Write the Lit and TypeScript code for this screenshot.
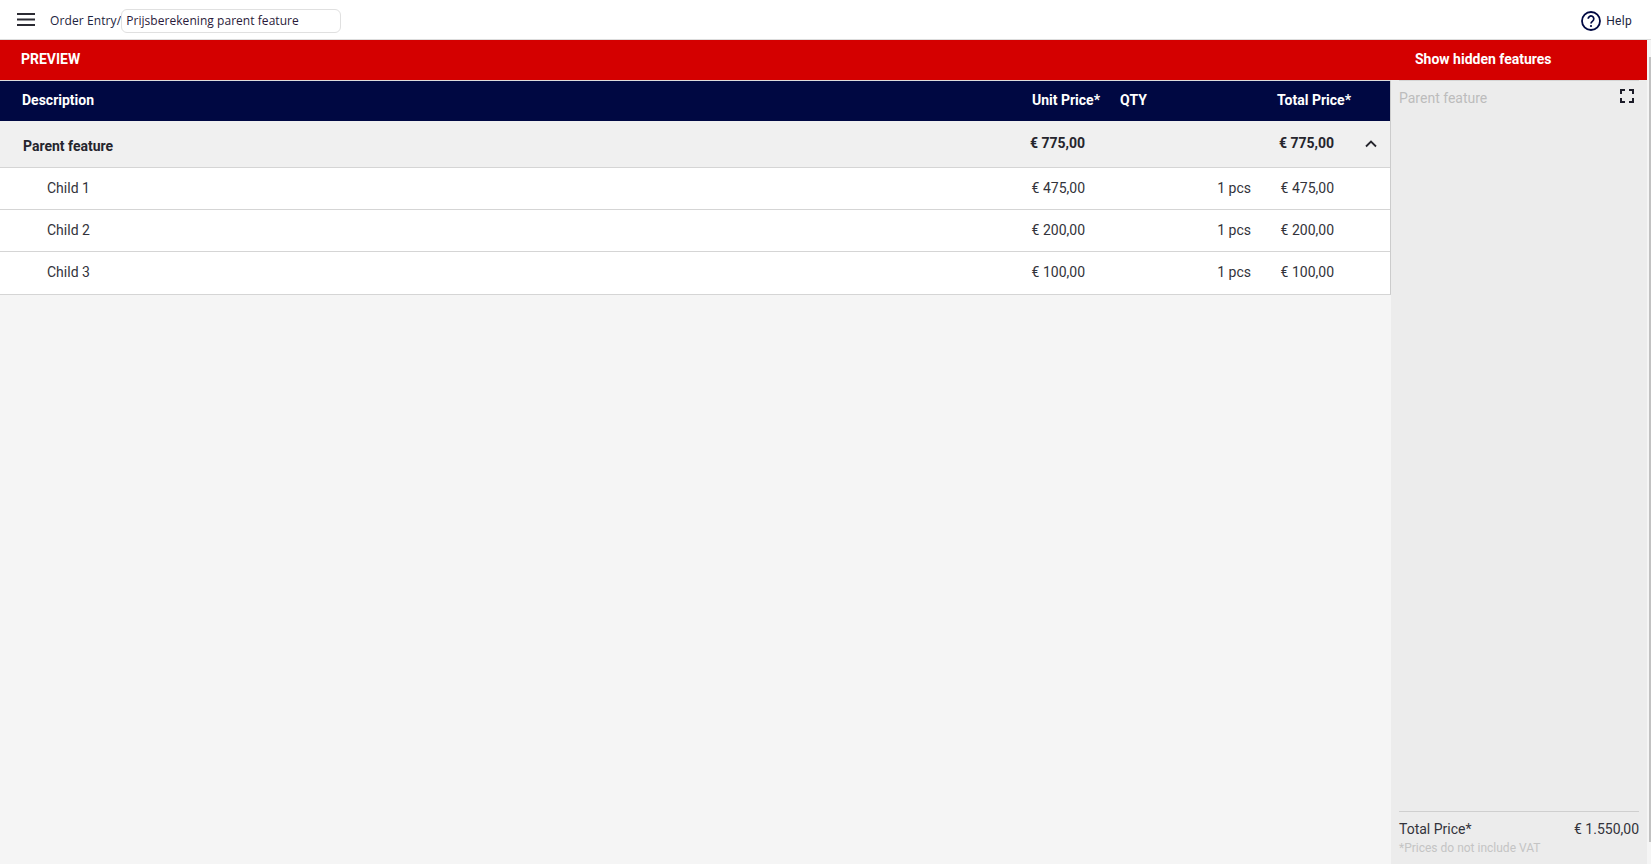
import { LitElement, html, css } from "lit";
import { customElement } from "lit/decorators.js";

const children = [
  { name: "Child 1", price: "€ 475,00" },
  { name: "Child 2", price: "€ 200,00" },
  { name: "Child 3", price: "€ 100,00" },
];

@customElement("app-root")
export class AppRoot extends LitElement {
  static styles = css`
    :host { display: block; width: 1651px; height: 864px; overflow: hidden; position: relative; background: #f5f5f5; font-family: Roboto, sans-serif; font-size: 14px; color: #33333b; }
    .top { height: 40px; box-sizing: border-box; background: #fff; border-bottom: 1px solid #ddd; display: flex; align-items: center; font-family: "Open Sans", sans-serif; font-size: 12px; padding: 2px 19px 0 17px; color: #1d2440; }
    .burger { width: 18px; height: 13px; display: block; margin: -2px 15px 0 0; }
    .crumb { letter-spacing: .1px; }
    .name { width: 220px; height: 24px; box-sizing: border-box; border: 1px solid #e0e0e0; border-radius: 6px; padding: 0 4px; display: flex; align-items: center; color: #2a1a3a; font-size: 12px; letter-spacing: .05px; }
    .help { margin-left: auto; display: flex; align-items: center; gap: 5px; font-family: Roboto, sans-serif; font-size: 12px; letter-spacing: .3px; }
    .help svg { display: block; }
    .red { height: 40px; width: 1647px; background: #d40000; color: #fff; font-weight: 700; display: flex; align-items: center; padding: 0 0 2px 21px; box-sizing: border-box; }
    .red .show { margin-left: auto; width: 232px; }
    .main { display: flex; height: 784px; width: 1647px; }
    .left { width: 1391px; flex: none; border-top: 1px solid #ddd; box-sizing: border-box; }
    .table { border-right: 1px solid #ccc; border-bottom: 1px solid #d5d5d5; box-sizing: border-box; }
    .row { display: grid; grid-template-columns: 1fr 85px 166px 83px 56px; align-items: center; box-sizing: border-box; padding-bottom: 2px; }
    .num { text-align: right; }
    .head { height: 40px; background: #000842; color: #fff; font-weight: 700; grid-template-columns: 1fr 90px 176px 75px 39px; padding-left: 22px; }
    .head .qty { padding-left: 20px; }
    .parent { height: 47px; background: #f0f0f0; font-weight: 700; border-bottom: 1px solid #d5d5d5; padding-left: 23px; color: #25252d; }
    .parent .lbl { padding-top: 6px; }
    .parent .chev { display: flex; justify-content: flex-end; padding-right: 12px; }
    .chev svg { display: block; }
    .child { height: 42px; background: #fff; border-bottom: 1px solid #d5d5d5; padding-left: 47px; }
    .child:last-child { border-bottom: 0; }
    .right { flex: 1; background: #ececec; box-sizing: border-box; padding: 0 8px; display: flex; flex-direction: column; }
    .pt { display: flex; justify-content: space-between; border-top: 1px solid #d5d5d5; padding-top: 8px; color: #bcbcbc; align-items: flex-start; }
    .pt span { padding-top: 1px; }
    .pt svg { margin-right: 5px; display: block; }
    .foot { margin-top: auto; border-top: 1px solid #cfcfcf; padding-top: 9px; height: 53px; box-sizing: border-box; }
    .total { display: flex; justify-content: space-between; }
    .note { font-size: 12px; color: #c4c4c4; margin-top: 4px; }
    .scroll { position: absolute; right: 0; top: 57px; width: 2px; height: 785px; background: #c1c1c1; }
  `;
  render() {
    return html`
      <div class="top">
        <svg class="burger" viewBox="0 0 18 13"><path d="M0 1h18M0 6.500h18M0 12h18" stroke="#2b2b33" stroke-width="2" fill="none"/></svg>
        <span class="crumb">Order Entry/</span>
        <div class="name">Prijsberekening parent feature</div>
        <div class="help">
          <svg width="20" height="20" viewBox="0 0 20 20"><circle cx="10" cy="10" r="9" stroke="#000842" stroke-width="1.800" fill="none"/><path d="M7.200 7.800a2.800 2.800 0 1 1 4.400 2.300c-1 .7-1.600 1.200-1.600 2.500" stroke="#000842" stroke-width="1.700" fill="none"/><circle cx="10" cy="15" r="1.100" fill="#000842"/></svg>
          Help
        </div>
      </div>
      <div class="red"><span>PREVIEW</span><span class="show">Show hidden features</span></div>
      <div class="main">
        <div class="left">
          <div class="table">
            <div class="row head"><span>Description</span><span class="num">Unit Price*</span><span class="qty">QTY</span><span class="num">Total Price*</span><span></span></div>
            <div class="row parent"><span class="lbl">Parent feature</span><span class="num">€ 775,00</span><span></span><span class="num">€ 775,00</span>
              <span class="chev"><svg width="14" height="9" viewBox="0 0 14 9"><path d="M2 7.500 7 2.500l5 5" stroke="#25252d" stroke-width="1.800" fill="none"/></svg></span></div>
            ${children.map(c => html`<div class="row child"><span>${c.name}</span><span class="num">${c.price}</span><span class="num">1 pcs</span><span class="num">${c.price}</span><span></span></div>`)}
          </div>
        </div>
        <div class="right">
          <div class="pt"><span>Parent feature</span>
            <svg width="14" height="14" viewBox="0 0 14 14"><path d="M1 5V1h4M9 1h4v4M13 9v4H9M5 13H1V9" stroke="#1c1c28" stroke-width="2" fill="none"/></svg></div>
          <div class="foot"><div class="total"><span>Total Price*</span><span>€ 1.550,00</span></div><div class="note">*Prices do not include VAT</div></div>
        </div>
      </div>
      <div class="scroll"></div>
    `;
  }
}
